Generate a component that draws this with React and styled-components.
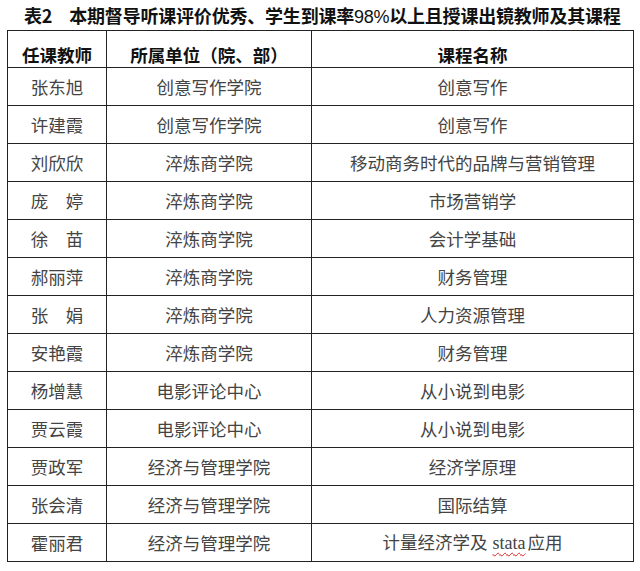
import React from "react";
import styled, { createGlobalStyle } from "styled-components";

const GlobalStyle = createGlobalStyle`
  html, body {
    margin: 0;
    padding: 0;
    background: #ffffff;
  }
  body {
    font-family: "Noto Sans CJK SC", "Noto Sans", sans-serif;
  }
`;

const Page = styled.div`
  width: 640px;
  height: 571px;
  padding: 0 0 0 7px;
  box-sizing: border-box;
  background: #ffffff;
`;

const Title = styled.h2`
  margin: 0;
  padding-left: 17px;
  height: 30px;
  line-height: 30px;
  font-size: 18px;
  font-weight: 700;
  color: #111;
  white-space: nowrap;
  letter-spacing: -0.2px;
`;

const Label = styled.span`
  margin-right: 17px;
`;

const Digits = styled.span`
  font-family: "Liberation Sans", "Noto Sans CJK SC", sans-serif;
  font-weight: 400;
  letter-spacing: -0.3px;
`;

const Grid = styled.table`
  width: 626px;
  border-collapse: collapse;
  table-layout: fixed;
  border: 1.5px solid #222;
`;

const Col = styled.col`
  width: ${(p) => p.$w}px;
`;

const HeadCell = styled.th`
  height: 37px;
  padding: 12px 0 0;
  box-sizing: border-box;
  border: 1.5px solid #222;
  font-size: 17.5px;
  font-weight: 700;
  color: #111;
  text-align: center;
  vertical-align: middle;
  line-height: 22px;
`;

const Cell = styled.td`
  height: 38px;
  padding: 0;
  box-sizing: border-box;
  border: 1.5px solid #222;
  font-size: 17.5px;
  font-weight: 400;
  color: #444;
  text-align: center;
  vertical-align: middle;
  line-height: 22px;
  white-space: nowrap;
`;

const Latin = styled.span`
  font-family: "Liberation Serif", serif;
  font-size: 18px;
  margin: 0 2px 0 5px;
  text-decoration: underline wavy #e02020;
  text-decoration-thickness: 1px;
  text-underline-offset: 3px;
`;

const rows = [
  ["张东旭", "创意写作学院", "创意写作"],
  ["许建霞", "创意写作学院", "创意写作"],
  ["刘欣欣", "淬炼商学院", "移动商务时代的品牌与营销管理"],
  ["庞　婷", "淬炼商学院", "市场营销学"],
  ["徐　苗", "淬炼商学院", "会计学基础"],
  ["郝丽萍", "淬炼商学院", "财务管理"],
  ["张　娟", "淬炼商学院", "人力资源管理"],
  ["安艳霞", "淬炼商学院", "财务管理"],
  ["杨增慧", "电影评论中心", "从小说到电影"],
  ["贾云霞", "电影评论中心", "从小说到电影"],
  ["贾政军", "经济与管理学院", "经济学原理"],
  ["张会清", "经济与管理学院", "国际结算"],
  ["霍丽君", "经济与管理学院", null],
];

const App = () => {
  return (
    <Page>
      <GlobalStyle />
      <Title>
        <Label>表2</Label>本期督导听课评价优秀、学生到课率<Digits>98%</Digits>以上且授课出镜教师及其课程
      </Title>
      <Grid>
        <colgroup>
          <Col $w={99} />
          <Col $w={205} />
          <Col $w={322} />
        </colgroup>
        <thead>
          <tr>
            <HeadCell>任课教师</HeadCell>
            <HeadCell>所属单位（院、部）</HeadCell>
            <HeadCell>课程名称</HeadCell>
          </tr>
        </thead>
        <tbody>
          {rows.map(([teacher, unit, course]) => (
            <tr key={teacher + unit}>
              <Cell>{teacher}</Cell>
              <Cell>{unit}</Cell>
              <Cell>
                {course ?? (
                  <>
                    计量经济学及<Latin>stata</Latin>应用
                  </>
                )}
              </Cell>
            </tr>
          ))}
        </tbody>
      </Grid>
    </Page>
  );
};

export default App;
